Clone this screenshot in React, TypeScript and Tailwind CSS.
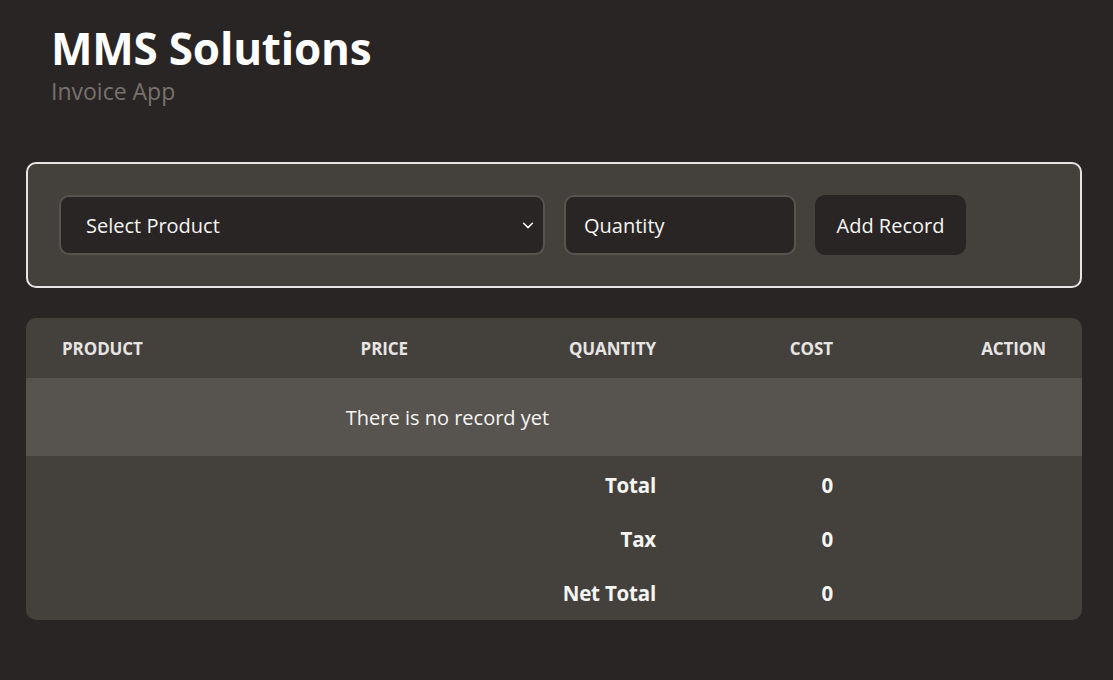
import React from "react";

export default function App() {
  const font = { fontFamily: '"Open Sans", "Noto Sans", sans-serif' };
  const cols = "grid grid-cols-[274px_144px_248px_177px_1fr]";
  return (
    <div className="min-h-[680px] w-full bg-[#292524] pl-[26px] pr-[31px] pt-[20px] text-[#f5f5f4]" style={font}>
      <div className="pl-[25px]">
        <h1 className="text-[44px] font-bold leading-[56px] tracking-[-0.2px] text-white">MMS Solutions</h1>
        <p className="text-[23px] leading-[30px] text-[#78716c]">Invoice App</p>
      </div>

      <div className="mt-[56px] flex items-center gap-[19px] rounded-[10px] border-2 border-[#e7e5e4] bg-[#44403c] px-[31px] py-[31px]">
        <div className="relative flex h-[60px] w-[486px] items-center rounded-[10px] border-2 border-[#57534e] bg-[#292524] pl-[25px] pt-[2px] text-[20px]">
          <span>Select Product</span>
          <svg className="absolute right-[8px] top-1/2 -translate-y-1/2" width="14" height="14" viewBox="0 0 16 16" fill="none" stroke="#f5f5f4" strokeWidth="1.8" strokeLinecap="round" strokeLinejoin="round">
            <path d="M3 6l5 5 5-5" />
          </svg>
        </div>
        <div className="flex h-[60px] w-[232px] items-center rounded-[10px] border-2 border-[#57534e] bg-[#292524] pl-[18px] pt-[2px] text-[20px]">
          <span>Quantity</span>
        </div>
        <button className="flex h-[60px] w-[151px] items-center justify-center rounded-[10px] bg-[#292524] pt-[2px] text-[20px] text-[#f5f5f4]">
          <span>Add Record</span>
        </button>
      </div>

      <div className="mt-[30px] overflow-hidden rounded-[10px] bg-[#44403c]">
        <div className={`${cols} h-[60px] items-center pt-[1px] text-[17px] font-bold uppercase tracking-[-0.1px] text-[#e7e5e4]`}>
          <div className="px-[36px] text-left">Product</div>
          <div className="px-[36px] text-right">Price</div>
          <div className="px-[36px] text-right">Quantity</div>
          <div className="px-[36px] text-right">Cost</div>
          <div className="px-[36px] text-right">Action</div>
        </div>
        <div className={`${cols} h-[78px] items-center bg-[#57534e] pt-[1px] text-[20px] text-[#f5f5f4]`}>
          <div className="col-span-4 text-center">There is no record yet</div>
          <div />
        </div>
        <div className="pt-[2px] text-[20.5px] font-bold tracking-[-0.2px] text-[#f5f5f4]">
          {[
            ["Total", "0"],
            ["Tax", "0"],
            ["Net Total", "0"],
          ].map(([label, value]) => (
            <div key={label} className={`${cols} h-[54px] items-center`}>
              <div />
              <div />
              <div className="px-[36px] text-right">{label}</div>
              <div className="px-[36px] text-right">{value}</div>
              <div />
            </div>
          ))}
        </div>
      </div>
    </div>
  );
}
